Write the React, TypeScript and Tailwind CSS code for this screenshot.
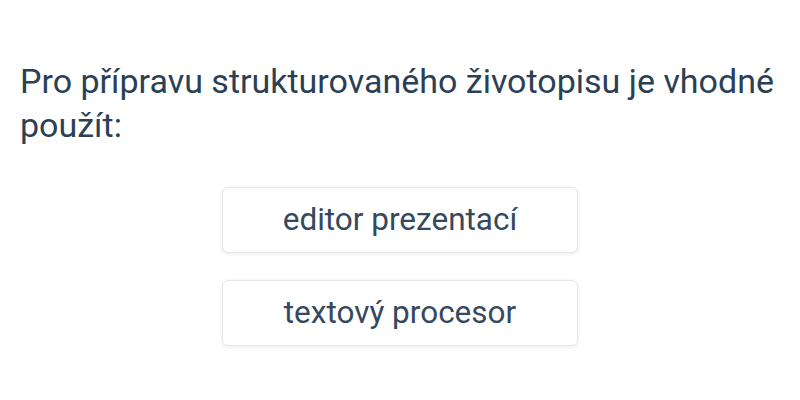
export default function App() {
  const options = ["editor prezentací", "textový procesor"];
  return (
    <div className="w-[800px] h-[400px] bg-white font-['Roboto',sans-serif] text-[#2b3f55]">
      <div className="px-5 pt-[59px]">
        <p className="text-[34px] leading-[44px]">
          Pro přípravu strukturovaného životopisu je vhodné použít:
        </p>
        <div className="mt-[40px] flex flex-col items-center gap-[27px]">
          {options.map((o) => (
            <button
              key={o}
              className="w-[356px] h-[66px] rounded-md border border-[#e6e6e6] bg-white shadow-[0_1px_4px_rgba(0,0,0,0.08)] text-[31.5px] text-[#34495e]"
            >
              {o}
            </button>
          ))}
        </div>
      </div>
    </div>
  );
}
